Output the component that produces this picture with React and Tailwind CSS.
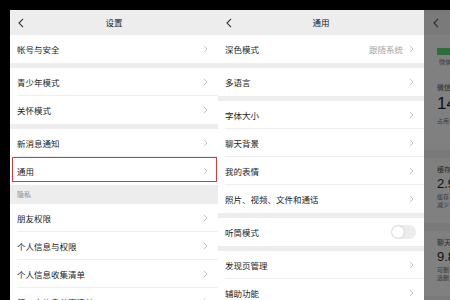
import React from "react";

const font = { fontFamily: '"Noto Sans CJK SC", "Noto Sans", sans-serif' };

function Chevron({ className = "" }) {
  return (
    <svg width="5" height="8" viewBox="0 0 5 8" className={className}>
      <path d="M0.8 0.8 L4 4 L0.8 7.2" fill="none" stroke="#c4c4c4" strokeWidth="1" />
    </svg>
  );
}

function Back({ color = "#333" }) {
  return (
    <svg width="6" height="10" viewBox="0 0 6 10">
      <path d="M5 0.8 L1 5 L5 9.2" fill="none" stroke={color} strokeWidth="1.1" />
    </svg>
  );
}

function Row({ label, right, last, toggle }) {
  return (
    <div className="h-[28px] shrink-0 bg-white flex items-center pl-[7px] relative">
      <div className="flex-1 flex items-center h-full pr-[10px]">
        <span className="flex-1 text-[8.5px] text-[#1c1c1c] leading-none whitespace-nowrap">{label}</span>
        {right && <span className="text-[8.5px] text-[#a6a6a6] leading-none mr-[6px]">{right}</span>}
        {toggle ? (
          <div className="w-[25px] h-[14px] rounded-full bg-[#ececec] flex items-center px-[1px] mr-[-2px]">
            <div className="w-[12px] h-[12px] rounded-full bg-white shadow-[0_0_1.5px_rgba(0,0,0,0.3)]" />
          </div>
        ) : (
          <Chevron />
        )}
      </div>
      {!last && <div className="absolute left-[7px] right-0 bottom-0 h-px bg-[#efefef]" />}
    </div>
  );
}

const Gap = () => <div className="h-[5px] shrink-0 bg-[#ededed]" />;

function Header({ title }) {
  return (
    <div className="h-[25px] shrink-0 bg-[#ededed] flex items-center relative">
      <div className="absolute left-[8px] top-[8px]"><Back /></div>
      <div className="flex-1 text-center text-[8.5px] text-[#1c1c1c] leading-none">{title}</div>
    </div>
  );
}

const num = { fontFamily: '"Liberation Sans", sans-serif' };

export default function App() {
  return (
    <div className="w-[450px] h-[300px] bg-black overflow-hidden pt-[10px] pl-[10px] flex" style={font}>
      {/* Panel 1 */}
      <div className="w-[208px] shrink-0 h-full bg-[#ededed] flex flex-col overflow-hidden">
        <Header title="设置" />
        <Row label="帐号与安全" last />
        <Gap />
        <Row label="青少年模式" />
        <Row label="关怀模式" last />
        <Gap />
        <Row label="新消息通知" />
        <div className="relative shrink-0">
          <Row label="通用" last />
          <div className="absolute left-[2px] right-[1px] top-0 h-[25px] border-[1.5px] border-[#d93a34]" />
        </div>
        <div className="h-[19px] shrink-0 bg-[#ededed] flex items-center pl-[7px] text-[7px] text-[#8a8a8a] leading-none">隐私</div>
        <Row label="朋友权限" />
        <Row label="个人信息与权限" />
        <Row label="个人信息收集清单" />
        <Row label="第三方信息共享清单" />
      </div>
      {/* Panel 2 */}
      <div className="w-[206px] shrink-0 h-full bg-[#ededed] flex flex-col overflow-hidden">
        <Header title="通用" />
        <Row label="深色模式" right="跟随系统" last />
        <Gap />
        <Row label="多语言" last />
        <Gap />
        <Row label="字体大小" />
        <Row label="聊天背景" />
        <Row label="我的表情" />
        <Row label="照片、视频、文件和通话" last />
        <Gap />
        <Row label="听筒模式" toggle last />
        <Gap />
        <Row label="发现页管理" />
        <Row label="辅助功能" />
      </div>
      {/* Panel 3 (dimmed) */}
      <div className="flex-1 h-full bg-[#7a7a7a] flex flex-col overflow-hidden whitespace-nowrap">
        <div className="h-[25px] shrink-0 flex items-center pl-[9px]"><Back color="#2a2a2a" /></div>
        <div className="bg-[#808080] h-[115px] shrink-0 pl-[13px] pt-[13px] flex flex-col">
          <div className="h-[7px] bg-[#2f6e3c] w-[20px]" />
          <div className="flex items-center mt-[4px] gap-[2px]">
            <div className="w-[3px] h-[3px] bg-[#2f6e3c]" />
            <span className="text-[6px] text-[#3a3a3a] leading-none">微信</span>
          </div>
          <span className="text-[7px] text-[#2a2a2a] leading-none mt-[19px]">微信</span>
          <span className="text-[17px] text-[#111] leading-none mt-[4px] font-medium" style={num}>14</span>
          <span className="text-[6px] text-[#3a3a3a] leading-none mt-[6px]">占用</span>
        </div>
        <div className="h-[8px] shrink-0" />
        <div className="bg-[#808080] h-[65px] shrink-0 pl-[13px] pt-[8px] flex flex-col">
          <span className="text-[7px] text-[#2a2a2a] leading-none">缓存</span>
          <span className="text-[13px] text-[#111] leading-none mt-[4px]" style={num}>2.9</span>
          <span className="text-[6px] text-[#3a3a3a] leading-none mt-[4px]">缓存</span>
          <span className="text-[6px] text-[#3a3a3a] leading-none mt-[2px]">减少</span>
        </div>
        <div className="h-[8px] shrink-0" />
        <div className="bg-[#808080] h-[65px] shrink-0 pl-[13px] pt-[8px] flex flex-col">
          <span className="text-[7px] text-[#2a2a2a] leading-none">聊天</span>
          <span className="text-[13px] text-[#111] leading-none mt-[4px]" style={num}>9.8</span>
          <span className="text-[6px] text-[#3a3a3a] leading-none mt-[4px]">可删</span>
          <span className="text-[6px] text-[#3a3a3a] leading-none mt-[2px]">选删</span>
        </div>
        <div className="h-[8px] shrink-0" />
        <div className="bg-[#808080] flex-1" />
      </div>
    </div>
  );
}
